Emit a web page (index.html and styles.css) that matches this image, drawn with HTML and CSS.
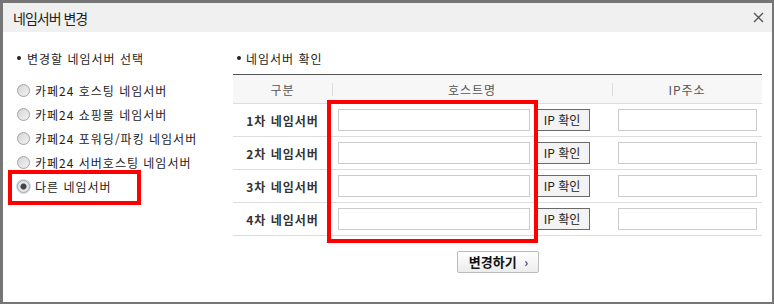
FILE: index.html
```html
<!DOCTYPE html>
<html lang="ko">
<head>
  <meta charset="UTF-8">
  <title>네임서버 변경</title>
  <link rel="stylesheet" href="styles.css">
</head>
<body>
  <div class="dialog">
    <div class="dialog-head">
      <span class="dialog-title">네임서버 변경</span>
      <svg class="close" width="11" height="11" viewBox="0 0 11 11">
        <path d="M1 1L10 10M10 1L1 10" stroke="#555" stroke-width="1.4" fill="none"/>
      </svg>
    </div>

    <div class="dialog-body">
      <div class="col-left">
        <h3 class="sub-title"><span class="dot"></span>변경할 네임서버 선택</h3>
        <ul class="radio-list">
          <li><span class="radio"></span>카페24 호스팅 네임서버</li>
          <li><span class="radio"></span>카페24 쇼핑몰 네임서버</li>
          <li><span class="radio"></span>카페24 포워딩/파킹 네임서버</li>
          <li><span class="radio"></span>카페24 서버호스팅 네임서버</li>
          <li><span class="radio checked"></span>다른 네임서버</li>
        </ul>
      </div>

      <div class="col-right">
        <h3 class="sub-title right"><span class="dot"></span>네임서버 확인</h3>
        <table class="ns-table">
          <colgroup>
            <col style="width:99px">
            <col style="width:280px">
            <col style="width:150px">
          </colgroup>
          <thead>
            <tr>
              <th>구분</th>
              <th class="sep">호스트명</th>
              <th class="sep">IP주소</th>
            </tr>
          </thead>
          <tbody>
            <tr>
              <td class="label">1차 네임서버</td>
              <td class="host"><input type="text" class="host-input"><button class="btn-ip">IP 확인</button></td>
              <td class="ip"><input type="text" class="ip-input"></td>
            </tr>
            <tr>
              <td class="label">2차 네임서버</td>
              <td class="host"><input type="text" class="host-input"><button class="btn-ip">IP 확인</button></td>
              <td class="ip"><input type="text" class="ip-input"></td>
            </tr>
            <tr>
              <td class="label">3차 네임서버</td>
              <td class="host"><input type="text" class="host-input"><button class="btn-ip">IP 확인</button></td>
              <td class="ip"><input type="text" class="ip-input"></td>
            </tr>
            <tr>
              <td class="label">4차 네임서버</td>
              <td class="host"><input type="text" class="host-input"><button class="btn-ip">IP 확인</button></td>
              <td class="ip"><input type="text" class="ip-input"></td>
            </tr>
          </tbody>
        </table>
        <div class="actions">
          <button class="btn-submit">변경하기 <span class="arrow">›</span></button>
        </div>
      </div>
    </div>

    <!-- red annotation boxes -->
    <div class="mark mark-radio"></div>
    <div class="mark mark-host"></div>
  </div>
</body>
</html>
```

FILE: styles.css
```css
body {
  margin: 0;
  padding: 0;
  background-color: #fff;
  font-family: "Noto Sans CJK KR", "Liberation Sans", sans-serif;
  font-size: 12px;
  color: #333;
}

.dialog {
  position: relative;
  width: 774px;
  height: 304px;
  box-sizing: border-box;
  border-style: solid;
  border-color: #767676;
  border-width: 3px 2px 2px 3px;
  background-color: #fff;
}

.dialog-head {
  display: flex;
  align-items: center;
  justify-content: space-between;
  height: 29px;
  padding: 0 8px 0 10px;
  background-color: #f0f0f0;
}

.dialog-title {
  font-size: 14px;
  color: #222;
  letter-spacing: -1px;
}

.close {
  display: block;
}

.dialog-body {
  display: flex;
  padding-top: 17px;
}

.col-left {
  width: 216px;
  padding-left: 14px;
}

.col-right {
  width: 529px;
}

.sub-title {
  display: flex;
  align-items: center;
  margin: 0;
  height: 18px;
  font-size: 12px;
  font-weight: normal;
  color: #222;
  letter-spacing: 1px;
}

.sub-title .dot {
  width: 4px;
  height: 4px;
  border-radius: 50%;
  background-color: #222;
  margin-right: 6px;
}

.sub-title.right {
  padding-left: 4px;
}

.sub-title.right .dot {
  margin-right: 5px;
}

.radio-list {
  list-style: none;
  margin: 11px 0 0;
  padding: 0;
}

.radio-list li {
  display: flex;
  align-items: center;
  height: 24px;
  color: #222;
  letter-spacing: 1px;
}

.radio {
  width: 11px;
  height: 11px;
  border: 1px solid #a2a2a2;
  border-radius: 50%;
  background: linear-gradient(135deg, #d4d4d4, #f4f4f4);
  margin-right: 5px;
  box-sizing: content-box;
}

.radio.checked {
  background: radial-gradient(circle, #444 0, #444 2.5px, #e2e2e2 3.5px, #f0f0f0 100%);
  box-shadow: 0 0 0 1px #c6dcf5;
}

/* table */
.ns-table {
  margin-top: 7px;
  width: 529px;
  table-layout: fixed;
  border-collapse: collapse;
  border-top: 1px solid #555;
}

.ns-table th {
  height: 28px;
  padding: 0;
  font-weight: normal;
  color: #555;
  letter-spacing: 1px;
  background-color: #f7f7f7;
  border-bottom: 1px solid #ddd;
}

.ns-table th.sep {
  background: linear-gradient(#ddd, #ddd) left center / 1px 13px no-repeat, #f7f7f7;
}

.ns-table td {
  height: 32px;
  padding: 0;
  border-bottom: 1px solid #ddd;
  vertical-align: middle;
}

.ns-table td.label {
  text-align: center;
  font-weight: bold;
  color: #333;
  letter-spacing: 1px;
}

.ns-table td.host {
  padding-left: 6px;
}

.ns-table td.ip {
  padding-left: 6px;
}

.host-input,
.ip-input {
  height: 22px;
  box-sizing: border-box;
  border: 1px solid #ccc;
  padding: 0 4px;
  margin: 0;
  vertical-align: middle;
  font-family: inherit;
}

.host-input {
  width: 192px;
}

.ip-input {
  width: 139px;
}

.btn-ip {
  width: 56px;
  height: 22px;
  margin: -1px 0 0 4px;
  padding: 0;
  border: 1px solid #6a6a6a;
  background-color: #f3f3f3;
  font-family: inherit;
  font-size: 12px;
  color: #222;
  vertical-align: middle;
}

.actions {
  display: flex;
  justify-content: center;
  margin-top: 15px;
}

.btn-submit {
  width: 82px;
  height: 22px;
  padding: 0 0 0 2px;
  border: 1px solid #bbb;
  border-radius: 2px;
  background: linear-gradient(#fff, #ececec);
  font-family: inherit;
  font-size: 13px;
  font-weight: bold;
  color: #111;
  line-height: 18px;
}

.btn-submit .arrow {
  font-size: 12px;
  color: #35456e;
  margin-left: 4px;
}

/* annotation overlays */
.mark {
  position: absolute;
  border: 4px solid #f00;
  box-sizing: border-box;
}

.mark-radio {
  left: 5px;
  top: 167px;
  width: 133px;
  height: 35px;
}

.mark-host {
  left: 324px;
  top: 97px;
  width: 211px;
  height: 143px;
}
```
